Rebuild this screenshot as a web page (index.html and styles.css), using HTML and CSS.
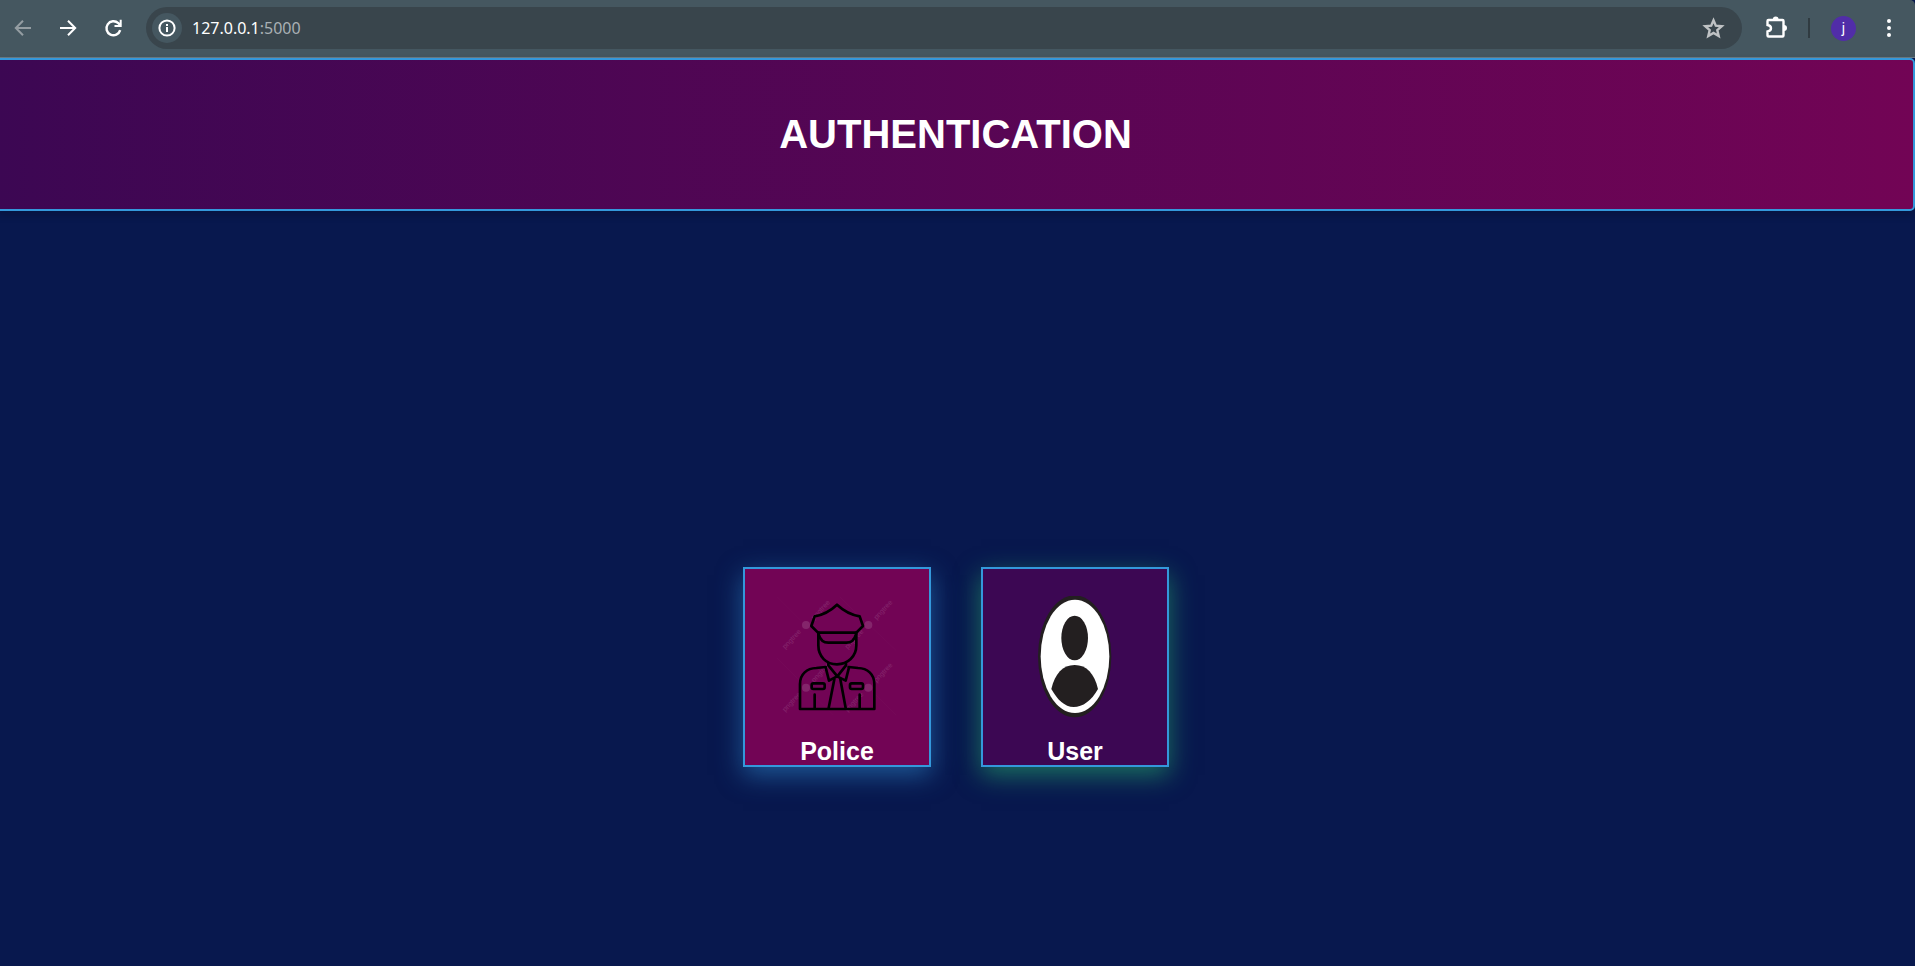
FILE: index.html
```html
<!DOCTYPE html>
<html lang="en">
<head>
<meta charset="utf-8">
<title>Authentication</title>
<link rel="stylesheet" href="styles.css">
</head>
<body>
<div class="toolbar">
  <button class="tool tool-dim" aria-label="Back"><svg viewBox="0 0 24 24"><path d="M20 12H5M12 4.700L4.800 12l7.200 7.300" class="line"/></svg></button>
  <button class="tool" aria-label="Forward"><svg viewBox="0 0 24 24"><path d="M4 12h15M12 4.700l7.200 7.300-7.200 7.300" class="line"/></svg></button>
  <button class="tool" aria-label="Reload"><svg viewBox="0 0 24 24"><path d="M19.200 14.200A7 7 0 1 1 17.300 7.200L19.500 9.400" class="line line-bold"/><path d="M20.700 3.800v7.200h-7.200V9h5.200V3.800z" class="fill"/></svg></button>
  <div class="address">
    <button class="site-info" aria-label="Site information"><svg viewBox="0 0 20 20"><circle cx="10" cy="10" r="7.600" class="line"/><path d="M9 9h2v5H9zM9 6h2v2H9z" class="fill"/></svg></button>
    <div class="url"><span class="host">127.0.0.1</span>:5000</div>
    <button class="tool tool-star" aria-label="Bookmark"><svg viewBox="0 0 24 24"><path d="M12.500 4.200l2.300 5.400 6 .6-4.500 3.900 1.400 5.900-5.200-3.100-5.200 3.100 1.400-5.900-4.500-3.900 6-.6z" class="line line-bold"/></svg></button>
  </div>
  <button class="tool" aria-label="Extensions"><svg viewBox="0 0 24 24"><path d="M5.500 4H19.500Q20.500 4 20.500 5V19.500Q20.500 20.500 19.500 20.500H5.500Q4.500 20.500 4.500 19.500V15.500Q8 15 8 12.300T4.500 9V5Q4.500 4 5.500 4z" class="line line-bold"/><path d="M9.800 3.500a2.900 2.900 0 0 1 5.800 0zM21 9a3 3 0 0 1 0 6z" class="fill"/></svg></button>
  <span class="separator"></span>
  <button class="avatar" aria-label="Profile">j</button>
  <button class="tool" aria-label="Menu"><svg viewBox="0 0 24 24"><circle cx="12" cy="5" r="2" class="fill"/><circle cx="12" cy="12" r="2" class="fill"/><circle cx="12" cy="19" r="2" class="fill"/></svg></button>
</div>
<div class="page">
  <header class="banner"><h1 class="title">AUTHENTICATION</h1></header>
  <main class="choices">
    <a href="#police" class="card card-police">
      <svg class="picture" viewBox="172 168 360 366" aria-hidden="true">
        <g class="watermark">
          <path d="M172 170l72 72M360 170l72 72M454 260l76 72M172 354l72 72M266 450l76 76M454 450l76 76"/>
          <circle cx="259" cy="255" r="12"/><circle cx="446" cy="255" r="12"/><circle cx="259" cy="443" r="12"/><circle cx="446" cy="443" r="12"/>
          <text transform="translate(284 240) rotate(-47)">pngtree</text>
          <text transform="translate(471 240) rotate(-47)">pngtree</text>
          <text transform="translate(197 328) rotate(-47)">pngtree</text>
          <text transform="translate(384 328) rotate(-47)">pngtree</text>
          <text transform="translate(284 428) rotate(-47)">pngtree</text>
          <text transform="translate(471 428) rotate(-47)">pngtree</text>
          <text transform="translate(197 516) rotate(-47)">pngtree</text>
          <text transform="translate(384 516) rotate(-47)">pngtree</text>
        </g>
        <g class="officer">
          <path d="M352 194Q382 222 420 229L430 258L410 278H295L275 258L285 229Q323 222 352 194z"/>
          <path d="M296 278V316C296 350 320 373 352 373S410 350 410 316V278"/>
          <path d="M297 283Q304 308 326 308H380Q402 308 409 283"/>
          <path d="M318 381L290 384C262 385 241 402 241 432V507H464V432C464 402 443 385 415 384L387 381"/>
          <path d="M326 371V376L353 409L379 376V371"/>
          <path d="M318 382L328 422L352 409L378 422L388 382"/>
          <path d="M344 418L327 504M362 418L378 504M285 464V504M420 464V504"/>
          <rect x="276" y="430" width="39" height="17" rx="5"/><rect x="391" y="430" width="39" height="17" rx="5"/>
        </g>
      </svg>
      <span class="label">Police</span>
    </a>
    <a href="#user" class="card card-user">
      <svg class="picture" viewBox="194 168 360 366" aria-hidden="true">
        <ellipse cx="373" cy="349" rx="110" ry="183" class="ink"/>
        <ellipse cx="374" cy="349" rx="103" ry="170" class="paper"/>
        <ellipse cx="373" cy="294" rx="40" ry="67" class="ink"/>
        <path d="M303 447C314 401 337 375 373 375S432 401 443 447C424 482 397 501 370 501S321 479 303 447z" class="ink"/>
      </svg>
      <span class="label">User</span>
    </a>
  </main>
</div>
</body>
</html>
```
FILE: styles.css
```css
* { box-sizing: border-box; }
body {
  margin: 0;
  min-height: 100vh;
  overflow-x: hidden;
  background: #08184e;
  font-family: "Liberation Sans", Arial, sans-serif;
}
button { padding: 0; border: 0; background: none; color: inherit; font: inherit; }

.toolbar {
  display: flex;
  align-items: center;
  gap: 21px;
  padding: 7px 14px 8px 11px;
  border-bottom: 1px solid #6b7c84;
  border-top-right-radius: 5px;
  background: #455760;
  color: #fff;
}
.tool { display: flex; flex: none; width: 24px; height: 24px; }
.tool svg { width: 24px; height: 24px; }
.tool-dim { color: #949da2; }
.tool-star { color: #bfc2c4; }
.line { fill: none; stroke: currentColor; stroke-width: 2; }
.line-bold { stroke-width: 2.4; }
.fill { fill: currentColor; }

.address {
  display: flex;
  flex: 1;
  align-items: center;
  height: 42px;
  padding: 0 17px 0 6px;
  border-radius: 21px;
  background: #39454c;
}
.site-info {
  display: flex;
  align-items: center;
  justify-content: center;
  width: 30px;
  height: 30px;
  border-radius: 50%;
  background: #455760;
}
.site-info svg { width: 20px; height: 20px; }
.url {
  flex: 1;
  padding-left: 10px;
  color: #a9b0b4;
  font: 16px/24px "Noto Sans", "Open Sans", sans-serif;
}
.host { color: #fff; }
.separator { width: 2px; height: 20px; background: #303b41; }
.avatar {
  width: 25px;
  height: 25px;
  border-radius: 50%;
  background: #512da8;
  font: 14px/24px Roboto, sans-serif;
}

.page { margin: 0 0 0 -4px; }
.banner {
  padding: 52px 20px;
  border: 2px solid #3498db;
  border-radius: 5px;
  background: linear-gradient(to right, #3c0753, #720455);
  box-shadow: 0 4px 8px rgba(0, 0, 0, 0.2);
  text-align: center;
}
.title { margin: 0; color: #fff; font-size: 40px; line-height: 45px; }

.choices {
  display: flex;
  justify-content: center;
  gap: 50px;
  padding: 356px 0 40px 1px;
}
.card {
  display: flex;
  flex-direction: column;
  align-items: center;
  gap: 19px;
  width: 188px;
  padding-top: 27px;
  border: 2px solid #3498db;
  color: #fff;
  text-decoration: none;
}
.card-police { background: #720455; box-shadow: 0 8px 24px rgba(52, 152, 219, 0.5); }
.card-user { background: #3c0753; box-shadow: 0 8px 24px rgba(46, 204, 113, 0.5); }
.picture { width: 120px; height: 122px; }
.label { font-size: 25px; font-weight: bold; line-height: 28px; }
.officer { fill: none; stroke: #000; stroke-width: 8; stroke-linejoin: round; stroke-linecap: round; }
.watermark { fill: #fff; opacity: 0.13; font: 21px "Liberation Sans", sans-serif; }
.watermark path { stroke: #fff; stroke-width: 1; opacity: 0.4; }
.ink { fill: #231f20; }
.paper { fill: #fff; }
```
